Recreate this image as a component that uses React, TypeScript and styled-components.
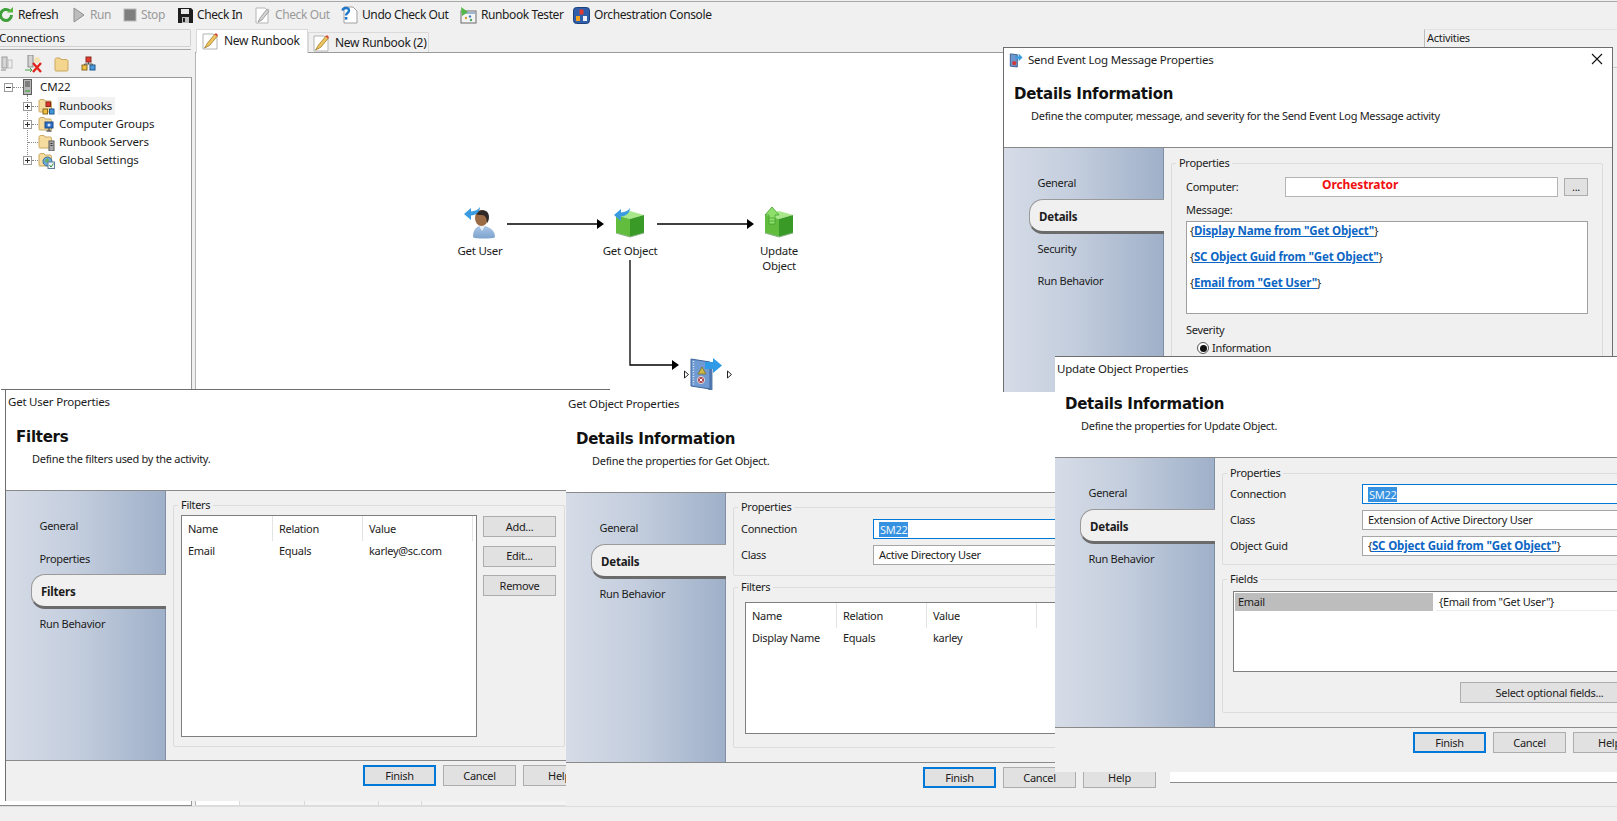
import { FC, ReactNode } from "react";
import styled, { createGlobalStyle } from "styled-components";

const GlobalStyle = createGlobalStyle`
  html, body {
    margin: 0;
    padding: 0;
    width: 100%;
    height: 100%;
    overflow: hidden;
    background: #f0f0f0;
  }
  * {
    box-sizing: border-box;
  }
  svg {
    flex: none;
  }
`;

const Shell = styled.div`
  position: relative;
  width: 1617px;
  height: 821px;
  display: flex;
  flex-direction: column;
  overflow: hidden;
  background: #f0f0f0;
  color: #1c1c1c;
  font-family: "Noto Sans", Tahoma, sans-serif;
  font-size: 11px;
  letter-spacing: -0.3px;
  line-height: 16px;
`;

const Toolbar = styled.div`
  height: 28px;
  flex: none;
  display: flex;
  align-items: center;
  gap: 12px;
  margin-top: 1px;
  margin-left: -2px;
  border-top: 1px solid #a8a8a8;
  padding-bottom: 1px;
  font-size: 12px;
  letter-spacing: -0.4px;
`;

const ToolButton = styled.div<{ $disabled?: boolean; $width: number }>`
  display: flex;
  align-items: center;
  gap: 4px;
  flex: none;
  width: ${(p) => p.$width}px;
  white-space: nowrap;
  color: ${(p) => (p.$disabled ? "#9a9a9a" : "#1c1c1c")};
`;

const Main = styled.div`
  flex: 1;
  min-height: 0;
  display: grid;
  grid-template-columns: 192px 1232px 193px;
`;

const LeftPanel = styled.div`
  display: flex;
  flex-direction: column;
  min-height: 0;
  font-size: 11.5px;
  letter-spacing: -0.12px;
`;

const PanelHead = styled.div`
  height: 18px;
  flex: none;
  border: 1px solid #d0d0d0;
  border-left: none;
  border-radius: 0 2px 2px 0;
  margin-right: 1px;
  line-height: 16px;
  text-indent: -1px;
`;

const PanelRule = styled.div`
  height: 1px;
  margin-top: 2px;
  margin-right: 1px;
  background: #a8a8a8;
`;

const PanelTools = styled.div`
  height: 27px;
  flex: none;
  display: flex;
  align-items: center;
  padding-left: 1px;
  gap: 12px;
`;

const TreePanel = styled.div`
  flex: 1;
  background: #fff;
  border-top: 1px solid #9a9a9a;
  border-right: 1px solid #9a9a9a;
  border-bottom: 1px solid #8a8a8a;
`;

const TreeRow = styled.div`
  height: 18px;
  display: flex;
  align-items: center;
  white-space: nowrap;
`;

const TreeBranch = styled.div`
  position: relative;
  margin-top: 1px;
  padding-left: 23px;
  &::before {
    content: "";
    position: absolute;
    left: 27px;
    top: -2px;
    height: 66px;
    border-left: 1px dotted #8a8a8a;
  }
`;

const Expander = styled.span`
  position: relative;
  z-index: 1;
  width: 9px;
  height: 9px;
  flex: none;
  border: 1px solid #9a9a9a;
  background: #fff;
  display: flex;
  align-items: center;
  justify-content: center;
  &::before {
    content: "";
    width: 5px;
    height: 1px;
    background: #333;
  }
`;

const PlusExpander = styled(Expander)`
  &::after {
    content: "";
    position: absolute;
    left: 3px;
    top: 1px;
    width: 1px;
    height: 5px;
    background: #333;
  }
`;

const ExpanderGap = styled.span`
  width: 5px;
  flex: none;
`;

const Connector = styled.span<{ $width: number }>`
  width: ${(p) => p.$width}px;
  flex: none;
  border-top: 1px dotted #8a8a8a;
`;

const TreeText = styled.span<{ $selected?: boolean }>`
  margin-left: 3px;
  padding: 0 3px 0 1px;
  line-height: 18px;
  background: ${(p) => (p.$selected ? "#f2f2f2" : "transparent")};
`;

const RootText = styled.span`
  margin-left: 8px;
`;

const RootExpanderWrap = styled.span`
  margin-left: 4px;
  display: flex;
  align-items: center;
`;

const CenterColumn = styled.div`
  display: flex;
  flex-direction: column;
  min-height: 0;
  padding-left: 3px;
`;

const TabStrip = styled.div`
  height: 23px;
  flex: none;
  display: flex;
  align-items: flex-end;
  padding-left: 1px;
`;

const Tab = styled.div<{ $active?: boolean }>`
  display: flex;
  align-items: center;
  gap: 5px;
  height: ${(p) => (p.$active ? 24 : 20)}px;
  width: ${(p) => (p.$active ? 112 : 121)}px;
  padding: ${(p) => (p.$active ? "0 0 2px 4px" : "0 0 0 3px")};
  margin-bottom: ${(p) => (p.$active ? -1 : 0)}px;
  background: ${(p) => (p.$active ? "#fff" : "#f0f0f0")};
  border: 1px solid #d9d9d9;
  border-bottom: none;
  position: relative;
  z-index: 1;
  white-space: nowrap;
  font-size: 12px;
  letter-spacing: -0.3px;
`;

const Canvas = styled.div`
  flex: 1;
  min-height: 0;
  display: flex;
  flex-direction: column;
  background: #fff;
  border-top: 1px solid #9a9a9a;
  border-left: 1px solid #b5b5b5;
  border-bottom: 1px solid #dcdcdc;
`;

const Diagram = styled.div`
  position: relative;
  flex: 1;
`;

const Wires = styled.svg`
  position: absolute;
  left: 0;
  top: 0;
  width: 100%;
  height: 100%;
`;

const Node = styled.div<{ $x: number; $y: number }>`
  position: absolute;
  left: ${(p) => p.$x}px;
  top: ${(p) => p.$y}px;
  width: 80px;
  display: flex;
  flex-direction: column;
  align-items: center;
  text-align: center;
`;

const NodeLabel = styled.div`
  margin-top: 4px;
  width: 62px;
  line-height: 15px;
  font-size: 11.5px;
  letter-spacing: -0.25px;
`;

const BottomTabs = styled.div`
  height: 6px;
  flex: none;
  display: flex;
  background: #f4f4f4;
`;

const BottomTab = styled.div<{ $width: number; $white?: boolean }>`
  width: ${(p) => p.$width}px;
  background: ${(p) => (p.$white ? "#fff" : "transparent")};
  border-right: 1px solid #dadada;
`;

const RightPanel = styled.div`
  border-left: 1px solid #bdbdbd;
  border-top: 1px solid #e2e2e2;
  padding-left: 2px;
  background: #f0f0f0;
`;

const RightHead = styled.div`
  height: 38px;
  line-height: 16px;
  border-bottom: 1px solid #c9c9c9;
`;

const StatusBar = styled.div`
  height: 15px;
  flex: none;
  background: #f0f0f0;
  border-top: 1px solid #dddddd;
`;

const DockedEdge = styled.div`
  position: absolute;
  left: 1170px;
  right: 0;
  top: 772px;
  height: 34px;
  background: linear-gradient(#fff 0 10px, #8c8c8c 10px 11px, #f0f0f0 11px);
`;

const Dialog = styled.section<{
  $left: number;
  $top: number;
  $width: number;
  $height: number;
  $framed?: boolean;
  $ruled?: boolean;
  $layer: number;
  $bleed?: boolean;
}>`
  position: absolute;
  left: ${(p) => p.$left}px;
  top: ${(p) => p.$top}px;
  width: ${(p) => p.$width}px;
  height: ${(p) => p.$height}px;
  z-index: ${(p) => p.$layer};
  display: flex;
  flex-direction: column;
  background: #f0f0f0;
  border-top: ${(p) => (p.$framed || p.$ruled ? "1px solid #6e6e6e" : "none")};
  border-left: ${(p) => (p.$framed ? "1px solid #6e6e6e" : "none")};
  &::before {
    content: "";
    display: ${(p) => (p.$bleed ? "block" : "none")};
    position: absolute;
    left: -5px;
    top: -1px;
    width: 5px;
    height: 1px;
    background: #6e6e6e;
  }
`;

const SendFrame = styled(Dialog)`
  border-right: 1px solid #6e6e6e;
`;

const Header = styled.header<{ $compact?: boolean }>`
  height: ${(p) => (p.$compact ? 100 : 101)}px;
  flex: none;
  background: #fff;
  border-bottom: 1px solid #8a8a8a;
  position: relative;
`;

const TitleRow = styled.div<{ $hasIcon?: boolean; $compact?: boolean }>`
  height: ${(p) => (p.$compact ? 23 : 24)}px;
  display: flex;
  align-items: center;
  gap: 5px;
  padding-left: ${(p) => (p.$hasIcon ? 5 : 2)}px;
  font-size: 11.5px;
  letter-spacing: -0.22px;
`;

const CloseGlyph = styled.svg`
  position: absolute;
  right: 9px;
  top: 5px;
`;

const Heading = styled.h2`
  margin: 13px 0 0 10px;
  height: 20px;
  line-height: 20px;
  font-family: "DejaVu Sans", Tahoma, sans-serif;
  font-size: 15px;
  letter-spacing: -0.25px;
  font-weight: 700;
  color: #111;
  white-space: nowrap;
`;

const SubHeading = styled.p<{ $shift?: number }>`
  margin: 4px 0 0 ${(p) => 26 + (p.$shift || 0)}px;
  height: 16px;
  white-space: nowrap;
`;

const Body = styled.div`
  height: 269px;
  flex: none;
  display: flex;
`;

const Sidebar = styled.nav`
  width: 160px;
  flex: none;
  padding-top: 19px;
  background: linear-gradient(90deg, #d6dce7 0%, #c3cddd 45%, #9fb0c9 100%);
  border-right: 1px solid #7f8ea3;
`;

const NavItem = styled.div`
  height: 32.67px;
  line-height: 32.67px;
  padding-left: 33.5px;
`;

const NavTab = styled.div`
  position: relative;
  height: 35px;
  margin: -1px -1px -1px 25px;
  padding-left: 9px;
  line-height: 33px;
  font-size: 11.5px;
  letter-spacing: -0.2px;
  font-weight: 700;
  background: #f0f0f0;
  border: 1px solid #9a9a9a;
  border-right: none;
  border-bottom: 3px solid #6b6b6b;
  border-radius: 14px 0 0 14px;
`;

const Pane = styled.div`
  flex: 1;
  min-width: 0;
  padding-left: 7px;
  display: flex;
  flex-direction: column;
`;

const Group = styled.fieldset<{ $width: number; $height: number; $gap: number }>`
  margin: ${(p) => p.$gap}px 0 0;
  padding: 0;
  width: ${(p) => p.$width}px;
  height: ${(p) => p.$height}px;
  flex: none;
  min-width: 0;
  border: 1px solid #dcdcdc;
  border-radius: 2px;
  legend {
    margin-left: 4px;
    padding: 0 3px;
    line-height: 16px;
    height: 16px;
  }
`;

const Rows = styled.div<{ $top: number }>`
  padding: ${(p) => p.$top}px 0 0 7px;
  display: flex;
  flex-direction: column;
  gap: 6px;
`;

const FieldRow = styled.div`
  display: flex;
  align-items: center;
  height: 20px;
`;

const FieldLabel = styled.span`
  width: 132px;
  flex: none;
`;

const TextBox = styled.div<{ $focus?: boolean }>`
  width: 300px;
  height: 20px;
  flex: none;
  display: flex;
  align-items: center;
  padding-left: 5px;
  background: #fff;
  white-space: nowrap;
  border: 1px solid ${(p) => (p.$focus ? "#0078d7" : "#a6a6a6")};
`;

const Selected = styled.span`
  background: #3692e0;
  color: #eef6fd;
  line-height: 15px;
  padding: 0 1px;
`;

const LinkText = styled.span`
  color: #0d66c4;
  font-size: 11.5px;
  letter-spacing: -0.15px;
  font-weight: 700;
  text-decoration: underline;
`;

const ListBox = styled.div<{ $width: number; $height: number; $top: number; $left: number }>`
  width: ${(p) => p.$width}px;
  height: ${(p) => p.$height}px;
  margin: ${(p) => p.$top}px 0 0 ${(p) => p.$left}px;
  flex: none;
  background: #fff;
  border: 1px solid #7f7f7f;
`;

const ListGrid = styled.div`
  display: grid;
  grid-template-columns: 91px 90px 110px;
  grid-template-rows: 25px 21px;
`;

const ListHead = styled.div`
  padding-left: 6px;
  line-height: 25px;
  border-right: 1px solid #e3e3e3;
`;

const ListCell = styled.div`
  padding-left: 6px;
  line-height: 19px;
  white-space: nowrap;
`;

const SplitRow = styled.div`
  display: flex;
  gap: 6px;
`;

const SideButtons = styled.div`
  display: flex;
  flex-direction: column;
  padding-top: 3px;
  gap: 8.5px;
`;

const PushButton = styled.div<{ $primary?: boolean; $width?: number }>`
  width: ${(p) => p.$width || 73}px;
  height: 21px;
  flex: none;
  display: flex;
  align-items: center;
  justify-content: center;
  background: #e1e1e1;
  border: ${(p) => (p.$primary ? "2px solid #0078d7" : "1px solid #adadad")};
`;

const Footer = styled.footer`
  flex: 1;
  min-height: 0;
  display: flex;
  justify-content: flex-end;
  gap: 7px;
  padding: 4px 14px 0 0;
  border-top: 1px solid #8a8a8a;
  background: #f0f0f0;
`;

const PropertyRow = styled.div`
  display: flex;
  align-items: center;
  height: 20px;
  padding-left: 14px;
  margin-top: 6px;
`;

const ComputerLabel = styled.span`
  width: 99px;
  flex: none;
`;

const ComputerBox = styled.div`
  width: 273px;
  height: 20px;
  flex: none;
  background: #fff;
  border: 1px solid #b4b4b4;
  padding-left: 36px;
  color: #f01010;
  font-weight: 700;
  font-size: 12px;
  letter-spacing: -0.1px;
  line-height: 13px;
`;

const BrowseButton = styled.div`
  width: 24px;
  height: 18px;
  margin-left: 6px;
  flex: none;
  background: #e1e1e1;
  border: 1px solid #adadad;
  text-align: center;
  line-height: 16px;
`;

const SmallLabel = styled.div<{ $top: number }>`
  margin: ${(p) => p.$top}px 0 0 14px;
  height: 16px;
`;

const MessageBox = styled.div`
  width: 402px;
  height: 93px;
  margin: 3px 0 0 14px;
  padding: 0 0 0 3px;
  background: #fff;
  border: 1px solid #a0a0a0;
`;

const MessageLine = styled.div`
  height: 18px;
  line-height: 18px;
  margin-bottom: 8px;
  white-space: nowrap;
`;

const RadioRow = styled.div`
  margin: 2px 0 0 25px;
  height: 16px;
  display: flex;
  align-items: center;
  gap: 3px;
`;

const RadioDot = styled.span`
  width: 12px;
  height: 12px;
  flex: none;
  border: 1px solid #555;
  border-radius: 50%;
  background: #fff;
  display: flex;
  align-items: center;
  justify-content: center;
  &::after {
    content: "";
    width: 7px;
    height: 7px;
    border-radius: 50%;
    background: #111;
  }
`;

const FieldGrid = styled.div`
  display: grid;
  grid-template-columns: 198px 300px;
  column-gap: 3px;
  height: 18px;
  margin: 1px 0 0 1px;
`;

const FieldKey = styled.div`
  background: #bdbdbd;
  padding-left: 3px;
  line-height: 17px;
`;

const FieldValue = styled.div`
  padding-left: 3px;
  line-height: 17px;
  border-bottom: 1px solid #ececec;
`;

const SelectFields = styled(PushButton)`
  margin: 10px 0 0 237px;
`;

/* ---------- icons ---------- */

const RefreshIcon = () => (
  <svg width="16" height="16" viewBox="0 0 16 16">
    <path d="M13.500 8a5.500 5.500 0 1 1-2-4.300" fill="none" stroke="#3f9f3a" strokeWidth="3" />
    <path d="M9 5.500h6V0z" fill="#58b63f" />
  </svg>
);

const RunIcon = () => (
  <svg width="14" height="16" viewBox="0 0 14 16">
    <path d="M2 1l10 7-10 7z" fill="#bdbdbd" stroke="#8f8f8f" />
  </svg>
);

const StopIcon = () => (
  <svg width="14" height="14" viewBox="0 0 14 14">
    <rect x="1" y="1" width="12" height="12" fill="#7e7e7e" stroke="#b9b9b9" />
  </svg>
);

const SaveIcon = () => (
  <svg width="15" height="15" viewBox="0 0 15 15">
    <path d="M0 0h13l2 2v13H0z" fill="#1e1e1e" />
    <rect x="3" y="1" width="8" height="5" fill="#e8e8e8" />
    <rect x="4" y="9" width="7" height="6" fill="#bdbdbd" />
    <rect x="5" y="10" width="2" height="4" fill="#222" />
  </svg>
);

const PageIcon = () => (
  <svg width="17" height="17" viewBox="0 0 17 17">
    <path d="M2 1h9l3 3v12H2z" fill="#fff" stroke="#b5b5b5" />
    <path d="M13 2L6 11l-2 4 4-2 7-9z" fill="#d4d4d4" stroke="#8f8f8f" strokeWidth=".8" />
    <path d="M12.500 2.500l2 2 1-1.400-1.700-1.700z" fill="#b5b5b5" />
  </svg>
);

const UndoIcon = () => (
  <svg width="17" height="18" viewBox="0 0 17 18">
    <path d="M3 1h9l4 4v12H3z" fill="#fff" stroke="#a0a0a0" />
    <path d="M1.500 4.500C2 1.500 8 1 8 4.500 8 7 5 7 5 9.500" fill="none" stroke="#1f77c9" strokeWidth="2.400" />
    <rect x="3.800" y="11" width="2.600" height="2.600" fill="#1f77c9" />
  </svg>
);

const TesterIcon = () => (
  <svg width="17" height="17" viewBox="0 0 17 17">
    <rect x="1" y="4" width="15" height="12" fill="#f4f4f4" stroke="#6a6a6a" />
    <rect x="2" y="5" width="13" height="2" fill="#9db7d5" />
    <path d="M1 0l7 5-6 4z" fill="#54b848" />
    <circle cx="6" cy="11" r="1.200" fill="#d0a030" />
    <circle cx="10" cy="9.500" r="1.200" fill="#4a82c4" />
    <circle cx="11" cy="13" r="1.200" fill="#4aa860" />
  </svg>
);

const ConsoleIcon = () => (
  <svg width="17" height="17" viewBox="0 0 17 17">
    <rect x=".5" y=".5" width="16" height="16" rx="3" fill="#2f5eaa" stroke="#1d3f7c" />
    <rect x="6.500" y="2.500" width="4" height="5" fill="#e23b2e" />
    <rect x="3" y="9" width="4" height="5" fill="#f0a21e" />
    <rect x="10" y="9" width="4" height="5" fill="#e9eef7" />
  </svg>
);

const PencilIcon = () => (
  <svg width="18" height="18" viewBox="0 0 18 18">
    <path d="M2 2h10l4 3v12H2z" fill="#fff" stroke="#b3b3b3" />
    <path d="M14 2L6.500 11l-3 5 5-2.500 8-9.500z" fill="#ecc560" stroke="#a37a2a" strokeWidth=".8" />
    <path d="M13.500 2.500l2.500 2 1-1.500-2-2z" fill="#d8493c" />
  </svg>
);

const ConnectIcon = () => (
  <svg width="12" height="16" viewBox="0 0 12 16">
    <rect x="1" y="1" width="5" height="11" fill="#d4d4d4" stroke="#9a9a9a" />
    <rect x="7" y="4" width="4" height="8" fill="#efefef" stroke="#bdbdbd" />
    <path d="M0 14h5" stroke="#8a8a8a" />
  </svg>
);

const DisconnectIcon = () => (
  <svg width="17" height="18" viewBox="0 0 17 18">
    <rect x="3" y="0" width="5" height="12" fill="#d4d4d4" stroke="#8a8a8a" />
    <path d="M0 15h7M5 13l2 2-2 2" fill="none" stroke="#4aa04a" />
    <circle cx="12" cy="5" r="3" fill="#f3e2b5" />
    <path d="M8 8l8 9M16 8l-8 9" stroke="#e0251c" strokeWidth="2.400" />
  </svg>
);

const FolderIcon = () => (
  <svg width="15" height="16" viewBox="0 0 15 16">
    <path d="M1 3.500C1 2.500 2 2 3 2h3l1 1.500h5c1 0 2 .5 2 1.500v9c0 1-1 1-2 1H3c-1 0-2 0-2-1z" fill="#f4d58e" stroke="#c9a760" />
  </svg>
);

const FlowIcon = () => (
  <svg width="15" height="15" viewBox="0 0 15 15">
    <rect x="5" y="1" width="5" height="5" fill="#e23a2e" stroke="#8a2a20" />
    <rect x="1" y="9" width="5" height="5" fill="#f0c040" stroke="#8a6a20" />
    <rect x="9" y="9" width="5" height="5" fill="#4c9be0" stroke="#20588a" />
    <path d="M7.500 6v2M3.500 9V8h8v1" fill="none" stroke="#555" />
  </svg>
);

const ServerIcon = () => (
  <svg width="9" height="16" viewBox="0 0 9 16">
    <rect x=".5" y=".5" width="8" height="15" fill="#b8b8b8" stroke="#5e5e5e" />
    <path d="M2 3h5M2 5h5M2 7h5" stroke="#444" />
    <rect x="2" y="11" width="5" height="2" fill="#6fae6f" />
  </svg>
);

const TreeFolder: FC<{ kind: "flow" | "group" | "server" | "globe" }> = ({ kind }) => (
  <svg width="17" height="17" viewBox="0 0 17 17">
    <path d="M1 3c0-1 1-1.500 2-1.500h3L7 3h5c1 0 1.500.5 1.500 1.500V14H2c-1 0-1-.5-1-1.500z" fill="#f5dc9e" stroke="#c9a862" />
    {kind === "flow" && (
      <>
        <rect x="8" y="4" width="4.500" height="4.500" fill="#e0352a" stroke="#8b2a20" />
        <rect x="5" y="11" width="4.500" height="5" fill="#f0bf3c" stroke="#8a6a20" />
        <rect x="11.500" y="11" width="4.500" height="5" fill="#3f97de" stroke="#20588a" />
      </>
    )}
    {kind === "group" && (
      <>
        <rect x="7" y="6" width="8" height="6" fill="#2f6fc6" stroke="#1d4a8a" />
        <circle cx="11" cy="9" r="1.500" fill="#dbe8f8" />
        <path d="M8.500 15h5M11 12v3" stroke="#5f5f5f" strokeWidth="1.400" />
      </>
    )}
    {kind === "server" && (
      <>
        <rect x="11" y="7" width="5" height="10" fill="#a9a9a9" stroke="#5a5a5a" />
        <path d="M12.500 9.500h2M12.500 11.500h2" stroke="#333" />
      </>
    )}
    {kind === "globe" && (
      <>
        <circle cx="9.500" cy="9.500" r="4.500" fill="#6ea9d8" stroke="#3a6c9c" />
        <path d="M7 8l3-2 1 3-3 2z" fill="#6caf5c" />
        <rect x="10" y="10" width="6.500" height="6.500" fill="#eef3f9" stroke="#5f7f9f" />
        <path d="M11.500 13l1.500 2 2.500-3.500" fill="none" stroke="#2d8f3c" />
      </>
    )}
  </svg>
);

const UserNodeIcon = () => (
  <svg width="32" height="32" viewBox="0 0 32 32">
    <defs>
      <linearGradient id="shirt" x1="0" y1="0" x2="0" y2="1">
        <stop offset="0" stopColor="#a9c6e6" />
        <stop offset="1" stopColor="#7ea3cd" />
      </linearGradient>
    </defs>
    <path d="M9 30c0-6 2-9 6-11h6c6 2 10 5 10 11 0 2-22 2-22 0z" fill="url(#shirt)" />
    <path d="M15 19l3 5 3-5z" fill="#e8eff8" />
    <ellipse cx="17.500" cy="11" rx="6.500" ry="8" fill="#9a6a44" />
    <path d="M12 7c2-5 13-6 13 3 0 3-1 5-2 6 0-5-2-8-5-8-2 0-5 0-6-1z" fill="#2f2a28" />
    <path d="M0 7l7-6v3.500C11 4 14 3 16 0c0 5-4 8-9 8.500V13z" fill="#3b9be0" />
  </svg>
);

const CubeBase = () => (
  <>
    <path d="M2 8l14-4 14 4-14 4z" fill="#a8e88a" />
    <path d="M2 8l14 4v18L2 26z" fill="#62bd3f" />
    <path d="M30 8l-14 4v18l14-4z" fill="#3a9a28" />
    <path d="M2 26l14 4 14-4" fill="none" stroke="#8db58a" />
  </>
);

const CubeGetIcon = () => (
  <svg width="32" height="32" viewBox="0 0 32 32">
    <CubeBase />
    <path d="M0 8l7-6v3.500C11 5 14 4 16 1c0 5-4 8-9 8.500V14z" fill="#3b9be0" />
  </svg>
);

const CubeUpdateIcon = () => (
  <svg width="32" height="32" viewBox="0 0 32 32">
    <CubeBase />
    <path d="M9 0L2 8h4v9h6V8h4z" fill="#8fe06a" stroke="#3f9f2c" strokeWidth=".8" />
    <path d="M6.500 11h5M6.500 14h5" stroke="#3f9f2c" strokeWidth=".8" />
  </svg>
);

const LogNodeIcon = () => (
  <svg width="32" height="32" viewBox="0 0 32 32">
    <path d="M18 5l4 1v26l-4-1z" fill="#5f87bd" stroke="#3c659c" strokeWidth=".8" />
    <path d="M1 1l19 3v27L1 28z" fill="#6f9ad2" stroke="#3c659c" />
    <path d="M3.500 3v24" stroke="#dbe6f5" strokeWidth="1.500" strokeDasharray="1 1.500" />
    <path d="M8 16l4-7 4 7z" fill="#c9b94a" stroke="#7f7028" strokeWidth=".8" />
    <circle cx="11" cy="22" r="3.600" fill="#a8454f" stroke="#dcdcdc" />
    <path d="M9.500 20.500l3 3M12.500 20.500l-3 3" stroke="#fff" />
    <path d="M15 4h8V0l9 7.500-9 7.500v-4h-8z" fill="#2f9be6" />
  </svg>
);

const SmallLogIcon = () => (
  <svg width="14" height="16" viewBox="0 0 32 36">
    <path d="M3 4l16 2v28L3 32z" fill="#6d97cc" stroke="#2f5588" strokeWidth="2" />
    <circle cx="12" cy="25" r="5" fill="#cf3b3b" />
    <path d="M14 10h8V3l9 9-9 9v-6h-8z" fill="#3b9be0" />
  </svg>
);

/* ---------- dialog parts ---------- */

interface DialogTopProps {
  title: string;
  heading: string;
  subtitle: string;
  shift?: number;
  icon?: ReactNode;
  closable?: boolean;
  compact?: boolean;
}

const DialogTop: FC<DialogTopProps> = ({ title, heading, subtitle, icon, closable, shift, compact }) => (
  <Header $compact={compact}>
    <TitleRow $hasIcon={!!icon} $compact={compact}>
      {icon}
      {title}
    </TitleRow>
    {closable && (
      <CloseGlyph width="12" height="12" viewBox="0 0 12 12">
        <path d="M1 1l10 10M11 1L1 11" stroke="#111" strokeWidth="1.100" />
      </CloseGlyph>
    )}
    <Heading>{heading}</Heading>
    <SubHeading $shift={shift}>{subtitle}</SubHeading>
  </Header>
);

const DialogNav: FC<{ nav: string[]; active: string }> = ({ nav, active }) => (
  <Sidebar>
    {nav.map((item) =>
      item === active ? <NavTab key={item}>{item}</NavTab> : <NavItem key={item}>{item}</NavItem>
    )}
  </Sidebar>
);

const FooterButtons = () => (
  <Footer>
    <PushButton $primary>Finish</PushButton>
    <PushButton>Cancel</PushButton>
    <PushButton>Help</PushButton>
  </Footer>
);

const App: FC = () => {
  return (
    <Shell>
      <GlobalStyle />
      <Toolbar>
        <ToolButton $width={62}><RefreshIcon />Refresh</ToolButton>
        <ToolButton $width={39} $disabled><RunIcon />Run</ToolButton>
        <ToolButton $width={43} $disabled><StopIcon />Stop</ToolButton>
        <ToolButton $width={64}><SaveIcon />Check In</ToolButton>
        <ToolButton $width={75} $disabled><PageIcon />Check Out</ToolButton>
        <ToolButton $width={107}><UndoIcon />Undo Check Out</ToolButton>
        <ToolButton $width={101}><TesterIcon />Runbook Tester</ToolButton>
        <ToolButton $width={140}><ConsoleIcon />Orchestration Console</ToolButton>
      </Toolbar>
      <Main>
        <LeftPanel>
          <PanelHead>Connections</PanelHead>
          <PanelRule />
          <PanelTools>
            <ConnectIcon />
            <DisconnectIcon />
            <FolderIcon />
            <FlowIcon />
          </PanelTools>
          <TreePanel>
            <TreeRow>
              <RootExpanderWrap>
                <Expander />
                <Connector $width={10} />
              </RootExpanderWrap>
              <ServerIcon />
              <RootText>CM22</RootText>
            </TreeRow>
            <TreeBranch>
              <TreeRow>
                <PlusExpander />
                <Connector $width={6} />
                <TreeFolder kind="flow" />
                <TreeText $selected>Runbooks</TreeText>
              </TreeRow>
              <TreeRow>
                <PlusExpander />
                <Connector $width={6} />
                <TreeFolder kind="group" />
                <TreeText>Computer Groups</TreeText>
              </TreeRow>
              <TreeRow>
                <ExpanderGap />
                <Connector $width={10} />
                <TreeFolder kind="server" />
                <TreeText>Runbook Servers</TreeText>
              </TreeRow>
              <TreeRow>
                <PlusExpander />
                <Connector $width={6} />
                <TreeFolder kind="globe" />
                <TreeText>Global Settings</TreeText>
              </TreeRow>
            </TreeBranch>
          </TreePanel>
        </LeftPanel>

        <CenterColumn>
          <TabStrip>
            <Tab $active><PencilIcon />New Runbook</Tab>
            <Tab><PencilIcon />New Runbook (2)</Tab>
          </TabStrip>
          <Canvas>
            <Diagram>
              <Wires>
                <g stroke="#000" strokeWidth="1.300" fill="none">
                  <path d="M311 171H402" />
                  <path d="M461 171H551" />
                  <path d="M434 207V312H476" />
                </g>
                <path d="M401 166l7 5-7 5zM551 166l7 5-7 5zM476 307l7 5-7 5z" fill="#000" />
                <path d="M488.500 318l4 3.500-4 3.500zM531.500 318l4 3.500-4 3.500z" fill="#fff" stroke="#222" />
              </Wires>
              <Node $x={244} $y={154}><UserNodeIcon /><NodeLabel>Get User</NodeLabel></Node>
              <Node $x={394} $y={154}><CubeGetIcon /><NodeLabel>Get Object</NodeLabel></Node>
              <Node $x={543} $y={154}><CubeUpdateIcon /><NodeLabel>Update Object</NodeLabel></Node>
              <Node $x={470} $y={305}><LogNodeIcon /></Node>
            </Diagram>
            <BottomTabs>
              <BottomTab $white $width={44} />
              <BottomTab $width={65} />
              <BottomTab $width={74} />
              <BottomTab $width={43} />
            </BottomTabs>
          </Canvas>
        </CenterColumn>

        <RightPanel>
          <RightHead>Activities</RightHead>
        </RightPanel>
      </Main>
      <StatusBar />
      <DockedEdge />

      <SendFrame $left={1003} $top={47} $width={610} $height={360} $framed $layer={2}>
        <DialogTop
          title="Send Event Log Message Properties"
          heading="Details Information"
          subtitle="Define the computer, message, and severity for the Send Event Log Message activity"
          shift={1}
          closable
          compact
          icon={<SmallLogIcon />}
        />
        <Body>
          <DialogNav nav={["General", "Details", "Security", "Run Behavior"]} active="Details" />
          <Pane>
            <Group $width={432} $height={260} $gap={7}>
              <legend>Properties</legend>
              <PropertyRow>
                <ComputerLabel>Computer:</ComputerLabel>
                <ComputerBox>Orchestrator</ComputerBox>
                <BrowseButton>...</BrowseButton>
              </PropertyRow>
              <SmallLabel $top={5}>Message:</SmallLabel>
              <MessageBox>
                <MessageLine>{"{"}<LinkText>Display Name from "Get Object"</LinkText>{"}"}</MessageLine>
                <MessageLine>{"{"}<LinkText>SC Object Guid from "Get Object"</LinkText>{"}"}</MessageLine>
                <MessageLine>{"{"}<LinkText>Email from "Get User"</LinkText>{"}"}</MessageLine>
              </MessageBox>
              <SmallLabel $top={8}>Severity</SmallLabel>
              <RadioRow><RadioDot />Information</RadioRow>
            </Group>
          </Pane>
        </Body>
      </SendFrame>

      <Dialog $left={5} $top={389} $width={605} $height={412} $framed $layer={3} $bleed>
        <DialogTop
          title="Get User Properties"
          heading="Filters"
          subtitle="Define the filters used by the activity."
        />
        <Body>
          <DialogNav nav={["General", "Properties", "Filters", "Run Behavior"]} active="Filters" />
          <Pane>
            <Group $width={392} $height={250} $gap={6}>
              <legend>Filters</legend>
              <SplitRow>
                <ListBox $width={296} $height={222} $top={2} $left={7}>
                  <ListGrid>
                    <ListHead>Name</ListHead>
                    <ListHead>Relation</ListHead>
                    <ListHead>Value</ListHead>
                    <ListCell>Email</ListCell>
                    <ListCell>Equals</ListCell>
                    <ListCell>karley@sc.com</ListCell>
                  </ListGrid>
                </ListBox>
                <SideButtons>
                  <PushButton>Add...</PushButton>
                  <PushButton>Edit...</PushButton>
                  <PushButton>Remove</PushButton>
                </SideButtons>
              </SplitRow>
            </Group>
          </Pane>
        </Body>
        <FooterButtons />
      </Dialog>

      <Dialog $left={566} $top={392} $width={604} $height={414} $layer={4}>
        <DialogTop
          title="Get Object Properties"
          heading="Details Information"
          subtitle="Define the properties for Get Object."
        />
        <Body>
          <DialogNav nav={["General", "Details", "Run Behavior"]} active="Details" />
          <Pane>
            <Group $width={430} $height={77} $gap={6}>
              <legend>Properties</legend>
              <Rows $top={4}>
                <FieldRow>
                  <FieldLabel>Connection</FieldLabel>
                  <TextBox $focus><Selected>SM22</Selected></TextBox>
                </FieldRow>
                <FieldRow>
                  <FieldLabel>Class</FieldLabel>
                  <TextBox>Active Directory User</TextBox>
                </FieldRow>
              </Rows>
            </Group>
            <Group $width={430} $height={169} $gap={3}>
              <legend>Filters</legend>
              <ListBox $width={410} $height={132} $top={7} $left={11}>
                <ListGrid>
                  <ListHead>Name</ListHead>
                  <ListHead>Relation</ListHead>
                  <ListHead>Value</ListHead>
                  <ListCell>Display Name</ListCell>
                  <ListCell>Equals</ListCell>
                  <ListCell>karley</ListCell>
                </ListGrid>
              </ListBox>
            </Group>
          </Pane>
        </Body>
        <FooterButtons />
      </Dialog>

      <Dialog $left={1055} $top={356} $width={605} $height={416} $ruled $layer={5}>
        <DialogTop
          title="Update Object Properties"
          heading="Details Information"
          subtitle="Define the properties for Update Object."
        />
        <Body>
          <DialogNav nav={["General", "Details", "Run Behavior"]} active="Details" />
          <Pane>
            <Group $width={430} $height={100} $gap={7}>
              <legend>Properties</legend>
              <Rows $top={3}>
                <FieldRow>
                  <FieldLabel>Connection</FieldLabel>
                  <TextBox $focus><Selected>SM22</Selected></TextBox>
                </FieldRow>
                <FieldRow>
                  <FieldLabel>Class</FieldLabel>
                  <TextBox>Extension of Active Directory User</TextBox>
                </FieldRow>
                <FieldRow>
                  <FieldLabel>Object Guid</FieldLabel>
                  <TextBox>{"{"}<LinkText>SC Object Guid from "Get Object"</LinkText>{"}"}</TextBox>
                </FieldRow>
              </Rows>
            </Group>
            <Group $width={430} $height={142} $gap={6}>
              <legend>Fields</legend>
              <ListBox $width={410} $height={81} $top={4} $left={10}>
                <FieldGrid>
                  <FieldKey>Email</FieldKey>
                  <FieldValue>{'{Email from "Get User"}'}</FieldValue>
                </FieldGrid>
              </ListBox>
              <SelectFields $width={179}>Select optional fields...</SelectFields>
            </Group>
          </Pane>
        </Body>
        <FooterButtons />
      </Dialog>
    </Shell>
  );
};

export default App;
